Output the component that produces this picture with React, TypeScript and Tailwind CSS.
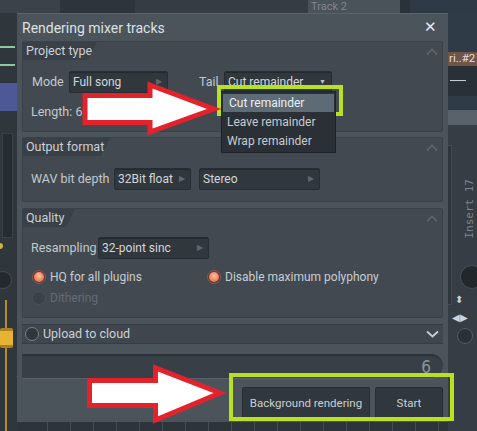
import React from 'react';

const FONT = { fontFamily: 'Roboto, "Noto Sans", sans-serif' };

const ChevronUp = () => (
  <svg width="12" height="8" viewBox="0 0 12 8" className="text-[#5d666e]">
    <path d="M1 6.5 L6 1.5 L11 6.5" fill="none" stroke="currentColor" strokeWidth="1.6" />
  </svg>
);

const ChevronDown = () => (
  <svg width="13" height="8" viewBox="0 0 13 8" className="text-[#c9ced3]">
    <path d="M1 1.5 L6.5 6.5 L12 1.5" fill="none" stroke="currentColor" strokeWidth="1.8" />
  </svg>
);

interface SelectProps {
  value: string;
  width: string;
  down?: boolean;
}

const Select: React.FC<SelectProps> = ({ value, width, down }) => (
  <div className={`${width} shrink-0 h-[22px] flex items-center justify-between pl-[3px] pr-[5px] bg-[#30373d] border border-[#272d32] rounded-[2px] shadow-[inset_0_1px_0_#252a2f]`}>
    <span className="text-[12px] text-[#d3d7db] leading-none whitespace-nowrap">{value}</span>
    {down ? (
      <span className="text-[7px] text-[#b9bfc5] leading-none">▼</span>
    ) : (
      <span className="text-[8px] text-[#5f676f] leading-none">▶</span>
    )}
  </div>
);

interface SectionProps {
  title: string;
  tabWidth: string;
  height: string;
  children: React.ReactNode;
}

const Section: React.FC<SectionProps> = ({ title, tabWidth, height, children }) => (
  <div className={`${height} flex flex-col bg-[#424950] border border-[#3a4148] rounded-[2px]`}>
    <div className="h-[18px] flex items-center justify-between shrink-0">
      <div className={`${tabWidth} h-full flex items-center pl-[3px] bg-[#394047] [clip-path:polygon(0_0,100%_0,calc(100%-9px)_100%,0_100%)]`}>
        <span className="text-[12.5px] text-[#ccd1d5] leading-none whitespace-nowrap">{title}</span>
      </div>
      <div className="pr-[4px] pt-[2px]">
        <ChevronUp />
      </div>
    </div>
    {children}
  </div>
);

const Radio: React.FC<{ on?: boolean; disabled?: boolean }> = ({ on, disabled }) => {
  if (on) {
    return (
      <div className="w-[14px] h-[14px] shrink-0 rounded-full bg-[#5b3a33] border border-[#8c5a4c] flex items-center justify-center">
        <div className="w-[10px] h-[10px] rounded-full bg-[radial-gradient(circle_at_50%_40%,#ffc2a6,#f0805e_60%,#d8613f)]" />
      </div>
    );
  }
  return (
    <div className={`w-[14px] h-[14px] shrink-0 rounded-full border ${disabled ? 'border-[#4a5259] bg-[#3a4147]' : 'border-[#7a8289] bg-[#30363c]'}`} />
  );
};

const Arrows = () => (
  <svg className="absolute left-0 top-0 pointer-events-none" width="477" height="431" viewBox="0 0 477 431">
    <polygon
      points="85,95.5 150,95.5 150,85 214,109 150,132 150,122.5 85,122.5"
      fill="#ffffff"
      stroke="#e3222b"
      strokeWidth="5"
      strokeLinejoin="miter"
    />
    <polygon
      points="89.5,380.5 155.5,380.5 155.5,368 220,393 155.5,420 155.5,405.5 89.5,405.5"
      fill="#ffffff"
      stroke="#e3222b"
      strokeWidth="5"
      strokeLinejoin="miter"
    />
  </svg>
);

const DawBackground = () => (
  <>
    {/* top strip above dialog */}
    <div className="absolute left-0 top-0 w-[477px] h-[13px] flex">
      <div className="w-[60px] bg-[#3b4249]" />
      <div className="w-[75px] bg-[#2d343a]" />
      <div className="w-[173px] bg-[#353c43]" />
      <div className="w-[92px] bg-[#4a525a] flex items-center pl-[3px]">
        <span className="text-[11px] leading-[12px] text-[#7f8890]">Track 2</span>
      </div>
      <div className="w-[10px] bg-[#2a3138]" />
      <div className="flex-1 bg-[#2e3a46]" />
    </div>

    {/* left strip */}
    <div className="absolute left-0 top-[13px] w-[17px] h-[418px] bg-[#2f363c]">
      <div className="absolute left-0 top-[33px] w-[15px] h-[2px] bg-[#8fc89f]" />
      <div className="absolute left-0 top-[51px] w-[15px] h-[2px] bg-[#8fc89f]" />
      <div className="absolute left-0 top-[70px] w-[17px] h-[28px] bg-[#4d5996]" />
      <div className="absolute left-[2px] top-[120px] w-[11px] h-[105px] bg-[#262c31] border border-[#3b4248]" />
      <div className="absolute left-[-3px] top-[230px] w-[6px] h-[6px] rounded-full bg-[#c7b43a]" />
      <div className="absolute left-[-6px] top-[258px] w-[18px] h-[18px] rounded-full bg-[#23282d] border border-[#444b52]" />
      <div className="absolute left-[5px] top-[287px] w-[2px] h-[131px] bg-[#b48d2b]" />
      <div className="absolute left-0 top-[315px] w-[13px] h-[20px] rounded-[2px] bg-[#e5b433] border-y-[3px] border-[#b07f1d]" />
    </div>

    {/* right strip */}
    <div className="absolute left-[448px] top-[13px] w-[29px] h-[418px] bg-[#2f3b47]">
      <div className="absolute left-0 top-[39px] w-[29px] h-[14px] bg-[#6e5548] flex items-center pl-[1px]">
        <span className="text-[11.5px] leading-none text-[#eadfd8] whitespace-nowrap">ri..#2</span>
      </div>
      <div className="absolute left-0 top-[53px] w-[29px] h-[30px] bg-[#2a3037]">
        <div className="absolute left-[2px] top-[14px] w-[16px] h-[1px] bg-[#c8cdd2]" />
      </div>
      <div className="absolute left-0 top-[97px] w-[29px] h-[15px] bg-[#59616a]" />
      <div className="absolute left-0 top-[112px] w-[29px] h-[306px] bg-[#363d44]">
        <div className="absolute left-[-2px] top-[20px] w-[6px] h-[160px] bg-[#2e353b] border border-[#444b52]" />
        <span className="absolute left-[16px] top-[54px] text-[11px] text-[#7b848c] leading-none [writing-mode:vertical-rl] rotate-180 font-['DejaVu_Sans_Mono']">Insert 17</span>
        <div className="absolute left-[12px] top-[140px] w-[24px] h-[24px] rounded-full bg-[#22272c] border border-[#4a5157]" />
        <span className="absolute left-[7px] top-[170px] text-[10px] leading-none text-[#cfd4d8]">⬍</span>
        <span className="absolute left-[4px] top-[188px] text-[10px] leading-none text-[#cfd4d8]">◀▶</span>
        <div className="absolute left-[9px] top-[203px] w-[16px] h-[16px] rounded-full bg-[#2a3035] border border-[#555c63]" />
      </div>
    </div>

    {/* bottom strip below dialog */}
    <div className="absolute left-[17px] top-[422px] w-[431px] h-[9px] bg-[#2d343a] flex gap-[22px] pl-[30px]">
      {Array.from({ length: 18 }).map((_, i) => (
        <div key={i} className="w-[1px] h-full bg-[#454c53]" />
      ))}
    </div>
  </>
);

export default function App() {
  return (
    <div className="relative w-[477px] h-[431px] overflow-hidden bg-[#2c333a]" style={FONT}>
      <DawBackground />

      {/* dialog */}
      <div className="absolute left-[17px] top-[13px] w-[431px] h-[409px] flex flex-col bg-[#4b535b] border-t border-[#5a626a] px-[5px]">
        <div className="h-[27px] shrink-0 flex items-center justify-between pr-[6px]">
          <span className="text-[14px] text-[#dde1e4] leading-none whitespace-nowrap">Rendering mixer tracks</span>
          <span className="text-[15px] text-[#e8ebee] leading-none">✕</span>
        </div>

        <Section title="Project type" tabWidth="w-[74px]" height="h-[91px]">
          <div className="flex items-center pl-[9px] mt-[11px] h-[22px]">
            <span className="w-[37px] shrink-0 text-[12.5px] text-[#c3c9ce]">Mode</span>
            <Select value="Full song" width="w-[99px]" />
            <span className="ml-[31px] w-[25px] shrink-0 text-[12.5px] text-[#c3c9ce]">Tail</span>
            <div className="relative">
              <Select value="Cut remainder" width="w-[108px]" down />
              <div className="absolute left-[-3px] top-[20px] w-[115px] bg-[#2a3035] border border-[#1d2226] py-[2px] px-[1px] z-10">
                <div className="h-[18px] flex items-center pl-[6px] bg-[#5d6b77] text-[12px] text-[#eceff1] whitespace-nowrap">Cut remainder</div>
                <div className="h-[19px] flex items-center pl-[4px] text-[12px] text-[#c6ccd1] whitespace-nowrap">Leave remainder</div>
                <div className="h-[19px] flex items-center pl-[4px] text-[12px] text-[#c6ccd1] whitespace-nowrap">Wrap remainder</div>
              </div>
            </div>
          </div>
          <div className="flex items-center pl-[8px] mt-[9px] h-[20px]">
            <span className="text-[12.5px] text-[#c3c9ce]">Length: 6</span>
          </div>
        </Section>

        <div className="mt-[5px]">
          <Section title="Output format" tabWidth="w-[87px]" height="h-[65px]">
            <div className="flex items-center pl-[8px] mt-[12px] h-[22px]">
              <span className="w-[83px] shrink-0 text-[12.5px] text-[#c3c9ce] whitespace-nowrap">WAV bit depth</span>
              <Select value="32Bit float" width="w-[77px]" />
              <div className="ml-[8px] shrink-0">
                <Select value="Stereo" width="w-[121px]" />
              </div>
            </div>
          </Section>
        </div>

        <div className="mt-[6px]">
          <Section title="Quality" tabWidth="w-[52px]" height="h-[110px]">
            <div className="flex items-center pl-[8px] mt-[10px] h-[22px]">
              <span className="w-[67px] shrink-0 text-[12.5px] text-[#c3c9ce]">Resampling</span>
              <Select value="32-point sinc" width="w-[111px]" />
            </div>
            <div className="flex items-center pl-[9px] mt-[9px] h-[18px]">
              <Radio on />
              <span className="ml-[4px] w-[157px] shrink-0 text-[12px] text-[#c8cdd2] whitespace-nowrap">HQ for all plugins</span>
              <Radio on />
              <span className="ml-[4px] text-[12px] text-[#c8cdd2] whitespace-nowrap">Disable maximum polyphony</span>
            </div>
            <div className="flex items-center pl-[9px] mt-[3px] h-[18px]">
              <Radio disabled />
              <span className="ml-[4px] text-[12px] text-[#646c74]">Dithering</span>
            </div>
          </Section>
        </div>

        <div className="mt-[6px] h-[20px] flex items-center justify-between pl-[3px] pr-[4px] bg-[#3f464d] border-y border-[#363c42]">
          <div className="flex items-center gap-[4px]">
            <Radio />
            <span className="text-[12.5px] text-[#cdd2d6]">Upload to cloud</span>
          </div>
          <ChevronDown />
        </div>

        <div className="mt-[10px] h-[24px] flex items-center justify-end pr-[12px] bg-[#393f46] border-t-2 border-[#2d3338] rounded-l-[6px] rounded-r-full shadow-[0_1px_0_#596068]">
          <span className="text-[17px] text-[#8d959c] leading-none font-['DejaVu_Sans_Condensed',sans-serif] font-light">6</span>
        </div>

        <div className="mt-[9px] flex justify-end gap-[5px]">
          <button className="w-[128px] h-[33px] bg-[#30373d] border border-[#262c31] rounded-[2px] text-[11.5px] text-[#cbd0d4] whitespace-nowrap">Background rendering</button>
          <button className="w-[68px] h-[33px] bg-[#30373d] border border-[#262c31] rounded-[2px] text-[11.5px] text-[#cbd0d4]">Start</button>
        </div>
      </div>

      {/* annotation highlights */}
      <div className="absolute left-[217px] top-[85px] w-[126px] h-[31px] border-[4px] border-[#b8e11f] pointer-events-none" />
      <div className="absolute left-[229px] top-[373px] w-[225px] h-[48px] border-[4px] border-[#b8e11f] pointer-events-none" />
      <Arrows />
    </div>
  );
}
